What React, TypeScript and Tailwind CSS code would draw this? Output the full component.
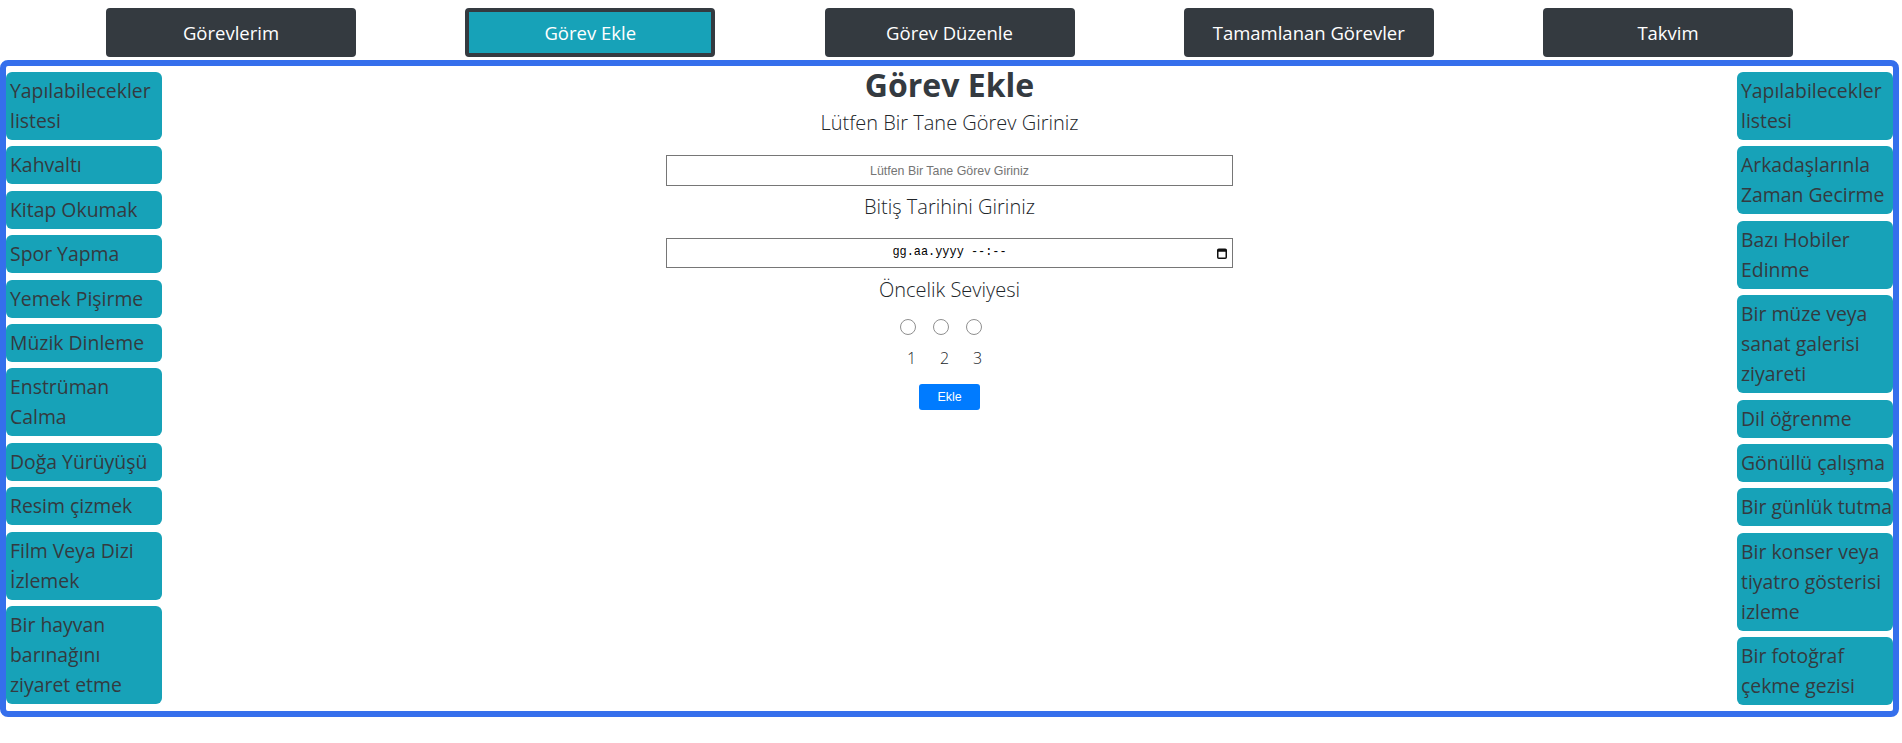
import { useState } from "react";

const leftItems = [
  "Yapılabilecekler listesi",
  "Kahvaltı",
  "Kitap Okumak",
  "Spor Yapma",
  "Yemek Pişirme",
  "Müzik Dinleme",
  "Enstrüman Calma",
  "Doğa Yürüyüşü",
  "Resim çizmek",
  "Film Veya Dizi İzlemek",
  "Bir hayvan barınağını ziyaret etme",
];

const rightItems = [
  "Yapılabilecekler listesi",
  "Arkadaşlarınla Zaman Gecirme",
  "Bazı Hobiler Edinme",
  "Bir müze veya sanat galerisi ziyareti",
  "Dil öğrenme",
  "Gönüllü çalışma",
  "Bir günlük tutma",
  "Bir konser veya tiyatro gösterisi izleme",
  "Bir fotoğraf çekme gezisi",
];

const navItems = ["Görevlerim", "Görev Ekle", "Görev Düzenle", "Tamamlanan Görevler", "Takvim"];

function SideList({ items }: { items: string[] }) {
  return (
    <div className="w-[156px] shrink-0 flex flex-col gap-[6.4px]">
      {items.map((item, i) => (
        <div
          key={i}
          className="bg-[#17a2b8] rounded-md pl-1 py-1 text-[19.4px] leading-[30px] text-[#343a40]"
        >
          {item}
        </div>
      ))}
    </div>
  );
}

export default function App() {
  const [task, setTask] = useState("");
  const [priority, setPriority] = useState("");

  return (
    <div className="w-full min-h-screen bg-white font-['Open_Sans',sans-serif]">
      {/* ust menu */}
      <nav className="flex justify-between pl-[106px] pr-[109px] pt-2 pb-[3px]">
        {navItems.map((name) => (
          <button
            key={name}
            className={
              name === "Görev Ekle"
                ? "w-[250px] h-[49px] rounded-[4px] bg-[#17a2b8] border-4 border-[#343a40] text-white text-[18.5px]"
                : "w-[250px] h-[49px] rounded-[4px] bg-[#343a40] text-white text-[18.5px]"
            }
          >
            {name}
          </button>
        ))}
      </nav>

      <div className="mr-[3px] flex border-[6px] border-[#356fec] rounded-lg pt-[6px] pb-[6px]">
        <SideList items={leftItems} />

        <div className="flex-1 flex flex-col items-center -mt-[6px]">
          <h2 className="text-[32px] leading-[38px] font-bold text-[#343a40]">Görev Ekle</h2>
          <p className="mt-[4px] text-[20px] leading-[30px] font-light text-[#212529]">
            Lütfen Bir Tane Görev Giriniz
          </p>
          <input
            type="text"
            value={task}
            onChange={(e) => setTask(e.target.value)}
            placeholder="Lütfen Bir Tane Görev Giriniz"
            className="mt-[17px] w-[567px] h-[31px] border border-[#767676] text-center text-[12.4px] font-['Liberation_Sans',Arial,sans-serif] placeholder:text-[#757575] focus:outline-none"
          />
          <p className="mt-[6px] text-[20px] leading-[30px] font-light text-[#212529]">
            Bitiş Tarihini Giriniz
          </p>
          <div className="mt-[16px] w-[567px] h-[30px] border border-[#767676] flex items-center relative">
            <span className="flex-1 text-center text-[11.9px] font-['Liberation_Mono',monospace] text-black">
              gg.aa.yyyy --:--
            </span>
            <svg className="absolute right-[5px] top-[9px]" width="10" height="11" viewBox="0 0 10 11">
              <rect x="0.75" y="1.25" width="8.5" height="9" rx="1" fill="none" stroke="#111" strokeWidth="1.5" />
              <rect x="0.75" y="1.25" width="8.5" height="2.5" fill="#111" />
            </svg>
          </div>
          <p className="mt-[7px] text-[20px] leading-[30px] font-light text-[#212529]">Öncelik Seviyesi</p>

          <div className="mt-[14px] mr-[17px] flex">
            {["1", "2", "3"].map((n) => (
              <label key={n} className="w-[33px] flex flex-col items-center">
                <input
                  type="radio"
                  name="priority"
                  value={n}
                  checked={priority === n}
                  onChange={() => setPriority(n)}
                  className="appearance-none w-4 h-4 rounded-full border border-[#8f8f8f] bg-white checked:border-[5px] checked:border-[#0075ff]"
                />
                <span className="mt-[11px] pl-[7px] text-[16px] leading-[24px] font-light text-[#212529]">{n}</span>
              </label>
            ))}
          </div>

          <button className="mt-[14px] w-[61px] h-[26px] rounded-[3px] bg-[#007bff] text-white text-[12.4px] font-['Liberation_Sans',Arial,sans-serif]">
            Ekle
          </button>
        </div>

        <SideList items={rightItems} />
      </div>
    </div>
  );
}
